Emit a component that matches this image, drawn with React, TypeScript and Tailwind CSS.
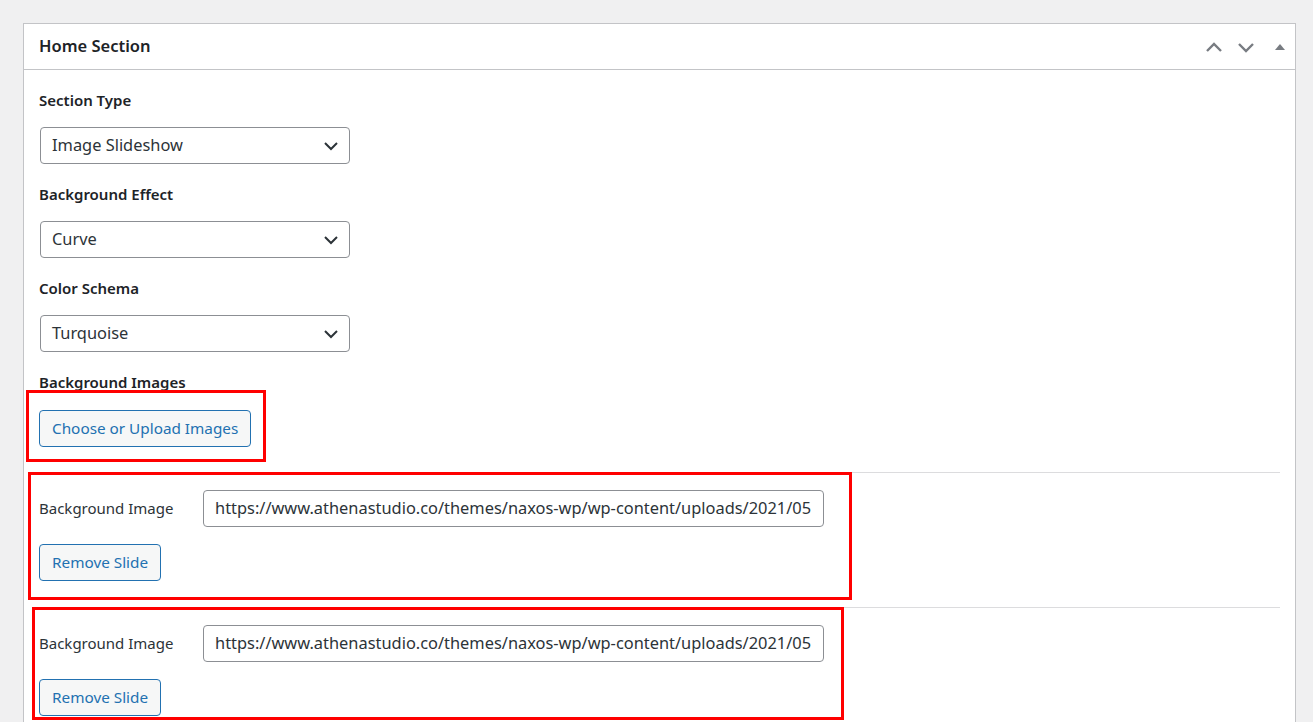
import React from "react";

const URL = "https://www.athenastudio.co/themes/naxos-wp/wp-content/uploads/2021/05";

function Chevron({ up }: { up?: boolean }) {
  return (
    <svg width="18" height="12" viewBox="0 0 18 12" className="text-[#787c82]">
      <path
        d={up ? "M2 10 L9 3 L16 10" : "M2 3 L9 10 L16 3"}
        fill="none"
        stroke="currentColor"
        strokeWidth="2.4"
      />
    </svg>
  );
}

function SelectBox({ value }: { value: string }) {
  return (
    <div className="ml-px w-[310px] h-[37px] border border-[#8c8f94] rounded-[4px] bg-white flex items-center justify-between pl-[11px] pr-[10px]">
      <span className="text-[16.4px] text-[#2c3338]">{value}</span>
      <svg width="16" height="10" viewBox="0 0 16 10">
        <path d="M2 2 L8 8 L14 2" fill="none" stroke="#2c3338" strokeWidth="2" />
      </svg>
    </div>
  );
}

function Btn({ children }: { children: React.ReactNode }) {
  return (
    <button className="h-[37px] px-[12px] border border-[#2271b1] rounded-[4px] bg-[#f6f7f7] text-[#2271b1] text-[15.3px] leading-none">
      {children}
    </button>
  );
}

function SlideRow() {
  return (
    <div className="pt-[17px]">
      <div className="flex items-center">
        <div className="w-[164px] text-[15px] text-[#2c3338]">Background Image</div>
        <div className="w-[621px] h-[37px] border border-[#8c8f94] rounded-[4px] bg-white flex items-center pl-[11px] overflow-hidden">
          <span className="whitespace-nowrap text-[16.4px] text-[#2c3338]">{URL}</span>
        </div>
      </div>
      <div className="mt-[17px]">
        <Btn>Remove Slide</Btn>
      </div>
    </div>
  );
}

export default function App() {
  return (
    <div
      className="relative min-h-[722px] bg-[#f0f0f1] pt-[23px] pl-[23px] pr-[17px] overflow-hidden"
      style={{ fontFamily: '"Noto Sans", "Open Sans", sans-serif' }}
    >
      <div className="bg-white border border-[#c3c4c7] min-h-[720px]">
        <div className="h-[46px] border-b border-[#c3c4c7] flex items-center justify-between pl-[15px] pr-[4px]">
          <h2 className="text-[16.5px] font-semibold text-[#1d2327]">Home Section</h2>
          <div className="flex items-center gap-[14px]">
            <Chevron up />
            <Chevron />
            <svg width="22" height="12" viewBox="0 0 22 12">
              <path d="M6 9 L11 3 L16 9 Z" fill="#787c82" />
            </svg>
          </div>
        </div>
        <div className="pl-[15px] pr-[15px] pt-[20px]">
          <div className="h-[20px] leading-[20px] text-[15px] font-semibold text-[#1d2327]">Section Type</div>
          <div className="mt-[17px]">
            <SelectBox value="Image Slideshow" />
          </div>
          <div className="mt-[20px] h-[20px] leading-[20px] text-[15px] font-semibold text-[#1d2327]">Background Effect</div>
          <div className="mt-[17px]">
            <SelectBox value="Curve" />
          </div>
          <div className="mt-[20px] h-[20px] leading-[20px] text-[15px] font-semibold text-[#1d2327]">Color Schema</div>
          <div className="mt-[17px]">
            <SelectBox value="Turquoise" />
          </div>
          <div className="mt-[20px] h-[20px] leading-[20px] text-[15px] font-semibold text-[#1d2327]">Background Images</div>
          <div className="mt-[18px]">
            <Btn>Choose or Upload Images</Btn>
          </div>
          <div className="mt-[25px] border-t border-[#dcdcde]" />
          <SlideRow />
          <div className="mt-[26px] border-t border-[#dcdcde]" />
          <SlideRow />
        </div>
      </div>

      {/* annotation boxes */}
      <div className="absolute left-[26px] top-[390px] w-[240px] h-[72px] border-[3px] border-[#ff0000]" />
      <div className="absolute left-[28px] top-[472px] w-[824px] h-[128px] border-[3px] border-[#ff0000]" />
      <div className="absolute left-[32px] top-[607px] w-[812px] h-[113px] border-[3px] border-[#ff0000]" />
    </div>
  );
}
